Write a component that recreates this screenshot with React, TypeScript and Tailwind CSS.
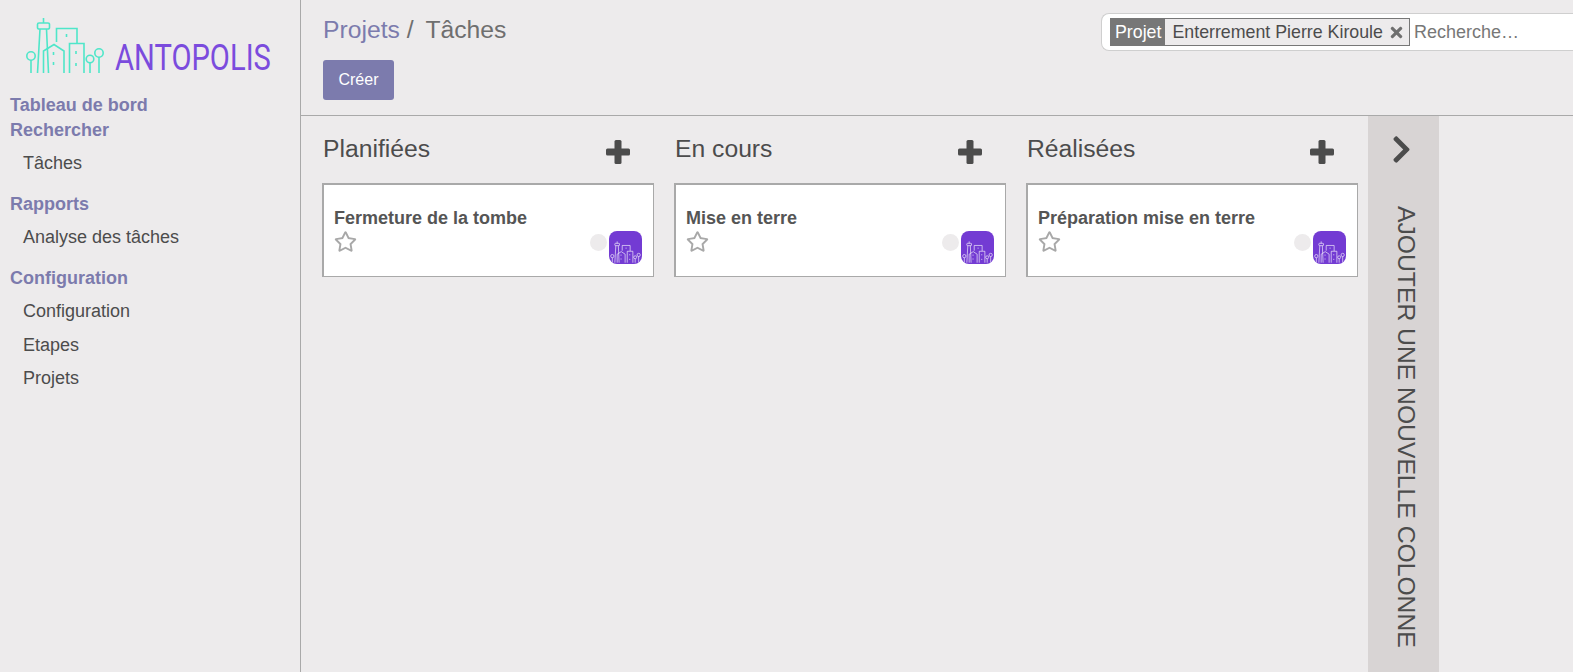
import { FaChevronRight, FaRegStar, FaTimes } from 'react-icons/fa';

function City({ color, width, className }: { color: string; width: number; className?: string }) {
  return (
    <svg viewBox="24 16 80 58" width={width} fill="none" stroke={color} strokeWidth="1.6" className={`shrink-0 ${className ?? ''}`}>
      {/* tower */}
      <path d="M42.500 17v5M38 22h9a1.500 1.500 0 0 1 1.500 1.500v3a1.500 1.500 0 0 1-1.500 1.500h-9a1.500 1.500 0 0 1-1.500-1.500v-3a1.500 1.500 0 0 1 1.500-1.500zM39 28l-2.500 44M45.500 28l2 44" />
      {/* house */}
      <path d="M42.500 72V50l10.500-6.500L63 50v22" />
      {/* back building */}
      <path d="M55.500 41V27.500H76V42M65.500 33v3" />
      {/* right building */}
      <path d="M68.500 72V42.500H83V72M75 50v3M75 62v3M52.500 51v3M52.500 61v3" />
      {/* trees */}
      <circle cx="30" cy="55" r="4.200" />
      <path d="M30 59v13" />
      <circle cx="89" cy="58" r="3.800" />
      <path d="M89 62v10" />
      <circle cx="98" cy="52" r="4.200" />
      <path d="M98 56v16" />
    </svg>
  );
}

function HeavyPlus() {
  return (
    <svg viewBox="0 0 24 24" width={24} height={24} fill="#4c4c4c" className="shrink-0 mt-[7px]">
      <rect x="8.500" y="0" width="7" height="24" rx="1.500" />
      <rect x="0" y="8.500" width="24" height="7" rx="1.500" />
    </svg>
  );
}

function MenuHeader({ label, className }: { label: string; className?: string }) {
  return <div className={`pl-[10px] h-[25px] leading-[25px] text-lg font-bold text-[#7C7BAD] ${className ?? ''}`}>{label}</div>;
}

function MenuItem({ label }: { label: string }) {
  return <div className="pl-[23px] h-[33.500px] leading-[33.500px] text-lg text-[#4c4c4c]">{label}</div>;
}

function Card({ title }: { title: string }) {
  return (
    <div className="h-[94px] bg-white border border-[#a9a9a9] border-t-2 border-l-2 pl-[10px] pr-[11px] pt-[22px] flex flex-col">
      <div className="text-lg leading-[22px] font-bold text-[#555555]">{title}</div>
      <div className="flex justify-between items-start">
        <FaRegStar className="text-[#a8a8a8] text-[23px] mt-[1px]" />
        <div className="flex items-start gap-[2px] mt-[2px]">
          <div className="w-[17px] h-[17px] mt-[3px] rounded-full bg-[#EDEBEC]" />
          <div className="w-[33px] h-[33px] rounded-lg bg-[#733BD3] flex items-end justify-center overflow-hidden pb-[1px]">
            <City color="#ffffff" width={31} />
          </div>
        </div>
      </div>
    </div>
  );
}

const columns = [
  { name: 'Planifiées', task: 'Fermeture de la tombe' },
  { name: 'En cours', task: 'Mise en terre' },
  { name: 'Réalisées', task: 'Préparation mise en terre' },
];

export default function App() {
  return (
    <div className="h-screen flex overflow-hidden bg-[#EDEBEC] text-[#4c4c4c] font-['Liberation_Sans',Arial,sans-serif]">
      {/* Sidebar */}
      <aside className="w-[301px] shrink-0 border-r border-[#a9a9a9]">
        <div className="h-[93px] flex items-start pl-[25px] pt-[17px] gap-[10px]">
          <City color="#4FE6C9" width={80} />
          <span className="mt-[23px] text-[36px] leading-[36px] font-['Roboto',sans-serif] text-[#7B4BDD] origin-left scale-x-[0.81]">
            ANTOPOLIS
          </span>
        </div>
        <MenuHeader label="Tableau de bord" />
        <MenuHeader label="Rechercher" />
        <div className="mt-[4px]">
          <MenuItem label="Tâches" />
        </div>
        <MenuHeader label="Rapports" className="mt-[11px]" />
        <div className="mt-[4px]">
          <MenuItem label="Analyse des tâches" />
        </div>
        <MenuHeader label="Configuration" className="mt-[12px]" />
        <div className="mt-[4px]">
          <MenuItem label="Configuration" />
          <MenuItem label="Etapes" />
          <MenuItem label="Projets" />
        </div>
      </aside>

      {/* Main */}
      <main className="flex-1 min-w-0 flex flex-col">
        <header className="h-[116px] shrink-0 border-b border-[#a9a9a9] flex justify-between pl-[22px]">
          <div>
            <div className="pt-[14px] text-[24.700px] leading-[32px] text-[#6f6f6f]">
              <span className="text-[#7C7BAD]">Projets</span>
              <span> / </span>
              <span className="ml-[5px]">Tâches</span>
            </div>
            <button className="mt-[14px] w-[71px] h-[40px] rounded-[3px] bg-[#7C7BAD] text-white text-base">Créer</button>
          </div>
          <div className="mt-[13px] w-[472px] h-[38px] bg-white border border-[#cfcfcf] border-r-0 rounded-l-lg flex items-center pl-[8px]">
            <div className="flex items-stretch h-[28px] border border-[#777777] bg-[#EDEBEC] text-[17.800px] leading-[24px]">
              <span className="bg-[#777777] text-white px-[4px] flex items-center">Projet</span>
              <span className="flex items-center pl-[7px] pr-[4px] text-[#4c4c4c] gap-[5px]">
                Enterrement Pierre Kiroule
                <FaTimes className="text-[#6f6f6f] text-[17px]" />
              </span>
            </div>
            <input placeholder="Recherche…" className="flex-1 min-w-0 pl-[4px] text-lg outline-none bg-transparent placeholder:text-[#777777]" />
          </div>
        </header>

        <div className="flex-1 min-h-0 flex pl-[21px]">
          <div className="flex gap-[20px]">
            {columns.map((col) => (
              <div key={col.name} className="w-[332px]">
                <div className="h-[67px] flex justify-between pl-[1px] pr-[24px] pt-[17px]">
                  <span className="text-[24.700px] leading-[32px] text-[#4c4c4c]">{col.name}</span>
                  <HeavyPlus />
                </div>
                <Card title={col.task} />
              </div>
            ))}
          </div>
          <div className="ml-[10px] w-[71px] bg-[#D8D4D4] flex flex-col items-center">
            <FaChevronRight className="text-[31px] mt-[18px] -ml-[4px] text-[#4c4c4c]" />
            <span className="mt-[41px] ml-[4px] [writing-mode:vertical-rl] text-[24.700px] leading-[32px] text-[#4c4c4c]">AJOUTER UNE NOUVELLE COLONNE</span>
          </div>
        </div>
      </main>
    </div>
  );
}
